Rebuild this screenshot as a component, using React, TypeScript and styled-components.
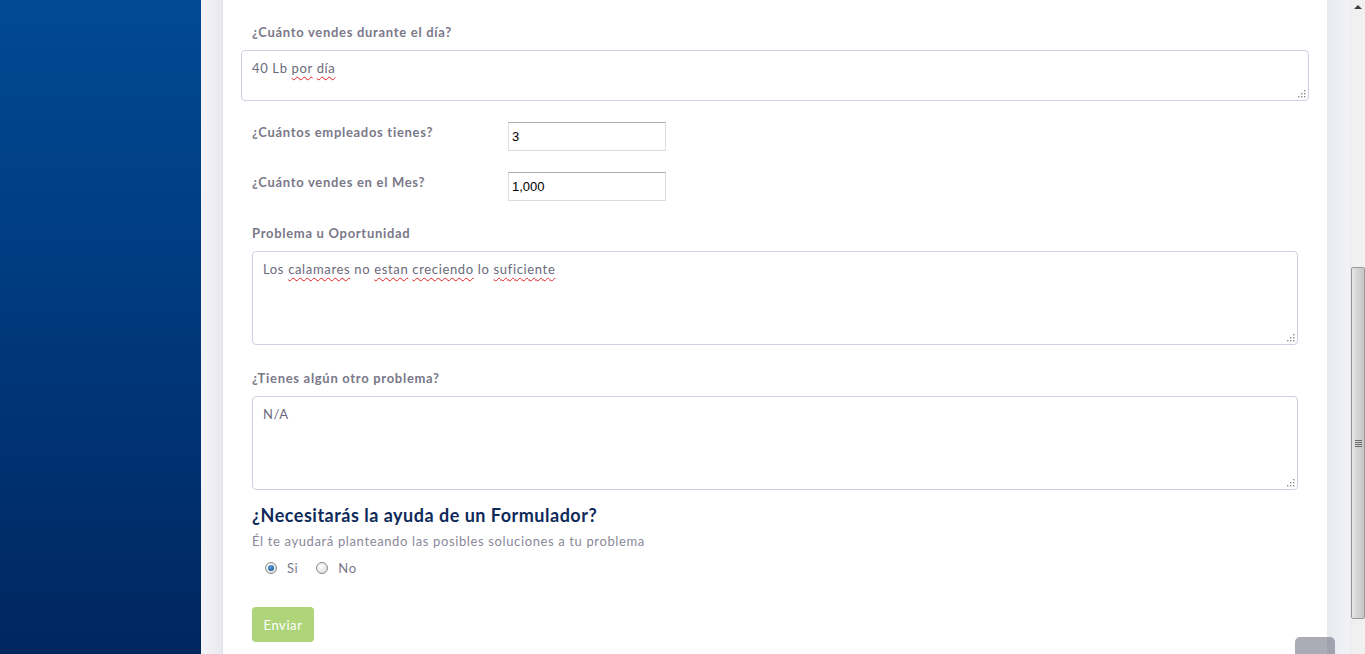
import React from "react";
import styled, { createGlobalStyle } from "styled-components";

const Global = createGlobalStyle`
  html, body { margin: 0; padding: 0; overflow: hidden; }
  body { font-family: "Lato", "Liberation Sans", sans-serif; }
  * { box-sizing: border-box; }
`;

const Page = styled.div`
  display: flex;
  width: 1365px;
  height: 654px;
  overflow: hidden;
  position: relative;
  background: #fff;
`;

const Sidebar = styled.div`
  width: 201px;
  flex: none;
  background: linear-gradient(to bottom, #014a93 0%, #00387c 50%, #00265f 100%);
`;

const Gutter = styled.div<{ $side: "left" | "right" }>`
  width: ${(p) => (p.$side === "left" ? "22px" : "23px")};
  flex: none;
  background: ${(p) =>
    p.$side === "left"
      ? "linear-gradient(to right, #f4f4f8, #e9eaf0 92%, #dfe0e8)"
      : "linear-gradient(to right, #e9eaf0, #f2f3f7)"};
`;

const Main = styled.main`
  flex: 1;
  padding: 23px 29px 0 29px;
  display: flex;
  flex-direction: column;
  letter-spacing: 0.6px;
`;

const Label = styled.div`
  font-size: 13px;
  line-height: 18px;
  font-weight: 700;
  color: #7a7889;
  letter-spacing: 0.7px;
`;

const Box = styled.div<{ $h: number; $wide?: boolean }>`
  position: relative;
  height: ${(p) => p.$h}px;
  margin: ${(p) => (p.$wide ? "0 -11px" : "0")};
  border: 1px solid #d2cee2;
  border-radius: 4px;
  padding: 8px 11px 8px 10px;
  font-size: 13px;
  line-height: 18px;
  color: #6b6a7b;
  background: #fff;
  letter-spacing: 0.65px;
`;

const Misspelled = styled.span`
  text-decoration: underline wavy #e02020;
  text-decoration-thickness: 1px;
  text-underline-offset: 3px;
`;

const Grip = styled.svg`
  position: absolute;
  right: 2px;
  bottom: 2px;
`;

const Field = styled.div<{ $top: number }>`
  display: flex;
  flex-direction: column;
  gap: 9px;
  margin-top: ${(p) => p.$top}px;
`;

const Row = styled.div<{ $top: number }>`
  display: grid;
  grid-template-columns: 256px 158px;
  align-items: start;
  margin-top: ${(p) => p.$top}px;
`;

const RowLabel = styled(Label)`
  padding-top: 1px;
`;

const SmallInput = styled.div`
  height: 29px;
  border: 1px solid #dcdce0;
  border-top-color: #ababb0;
  padding: 0 3px;
  display: flex;
  align-items: center;
  font-family: "Liberation Sans", Arial, sans-serif;
  font-size: 13px;
  letter-spacing: 0;
  color: #000;
`;

const Heading = styled.h2`
  margin: 13px 0 0;
  font-size: 18px;
  line-height: 24px;
  font-weight: 700;
  color: #0e2a5a;
  letter-spacing: 0.5px;
`;

const Sub = styled.p`
  margin: 5px 0 0;
  font-size: 13px;
  line-height: 18px;
  color: #8a8899;
  letter-spacing: 0.63px;
`;

const Radios = styled.div`
  display: flex;
  align-items: center;
  margin-top: 9px;
  padding-left: 13px;
  height: 18px;
  font-size: 13px;
  color: #7a7889;
`;

const RadioItem = styled.label`
  display: flex;
  align-items: center;
  gap: 10px;
  margin-right: 18px;
`;

const RadioCircle = styled.span<{ $on?: boolean }>`
  width: 12px;
  height: 12px;
  border-radius: 50%;
  border: 1px solid #8a8a8a;
  background: radial-gradient(circle at 40% 35%, #ffffff, #d6d6d6);
  display: flex;
  align-items: center;
  justify-content: center;
  &::after {
    content: "";
    display: ${(p) => (p.$on ? "block" : "none")};
    width: 6px;
    height: 6px;
    border-radius: 50%;
    background: radial-gradient(circle at 40% 35%, #5aa0e0, #104a88);
  }
`;

const Button = styled.button`
  margin-top: 30px;
  width: 62px;
  height: 35px;
  border: none;
  border-radius: 4px;
  background: #aed57a;
  color: #fff;
  font-family: inherit;
  font-size: 13px;
  letter-spacing: 0.6px;
  padding: 0;
`;

const Scrollbar = styled.div`
  width: 15px;
  flex: none;
  background: #f0f0f0;
  display: flex;
  flex-direction: column;
  align-items: center;
  border-left: 1px solid #e8e8e8;
`;

const ArrowUp = styled.div`
  margin-top: 5px;
  width: 0;
  height: 0;
  border-left: 4px solid transparent;
  border-right: 4px solid transparent;
  border-bottom: 4px solid #3c3c3c;
`;

const Thumb = styled.div`
  margin-top: 258px;
  width: 14px;
  height: 352px;
  border: 1px solid #979797;
  border-radius: 2px;
  background: linear-gradient(to right, #e6e6e6, #d6d6d6 40%, #c6c6c6);
  display: flex;
  align-items: center;
  justify-content: center;
`;

const ThumbGrip = styled.div`
  width: 7px;
  height: 7px;
  background: repeating-linear-gradient(to bottom, #6a6a6a 0 1px, transparent 1px 2px);
`;

const TopButton = styled.div`
  position: absolute;
  left: 1295px;
  bottom: 0;
  width: 40px;
  height: 17px;
  border-radius: 5px 5px 0 0;
  background: rgba(90, 90, 110, 0.5);
`;

const GripIcon = () => (
  <Grip width="8" height="8" viewBox="0 0 8 8">
    {[
      [6, 0],
      [6, 3],
      [3, 3],
      [6, 6],
      [3, 6],
      [0, 6],
    ].map(([x, y], i) => (
      <rect key={i} x={x} y={y} width="1.4" height="1.4" fill="#8c8c8c" />
    ))}
  </Grip>
);

export default function App() {
  return (
    <Page>
      <Global />
      <Sidebar />
      <Gutter $side="left" />
      <Main>
        <Field $top={0}>
          <Label>¿Cuánto vendes durante el día?</Label>
          <Box $h={51} $wide>
            40 Lb <Misspelled>por</Misspelled> <Misspelled>día</Misspelled>
            <GripIcon />
          </Box>
        </Field>
        <Row $top={21}>
          <RowLabel>¿Cuántos empleados tienes?</RowLabel>
          <SmallInput>3</SmallInput>
        </Row>
        <Row $top={21}>
          <RowLabel>¿Cuánto vendes en el Mes?</RowLabel>
          <SmallInput>1,000</SmallInput>
        </Row>
        <Field $top={23}>
          <Label>Problema u Oportunidad</Label>
          <Box $h={94}>
            Los <Misspelled>calamares</Misspelled> no <Misspelled>estan</Misspelled>{" "}
            <Misspelled>creciendo</Misspelled> lo <Misspelled>suficiente</Misspelled>
            <GripIcon />
          </Box>
        </Field>
        <Field $top={24}>
          <Label>¿Tienes algún otro problema?</Label>
          <Box $h={94}>
            N/A
            <GripIcon />
          </Box>
        </Field>
        <Heading>¿Necesitarás la ayuda de un Formulador?</Heading>
        <Sub>Él te ayudará planteando las posibles soluciones a tu problema</Sub>
        <Radios>
          <RadioItem>
            <RadioCircle $on />
            Si
          </RadioItem>
          <RadioItem>
            <RadioCircle />
            No
          </RadioItem>
        </Radios>
        <div>
          <Button>Enviar</Button>
        </div>
      </Main>
      <Gutter $side="right" />
      <Scrollbar>
        <ArrowUp />
        <Thumb>
          <ThumbGrip />
        </Thumb>
      </Scrollbar>
      <TopButton />
    </Page>
  );
}
